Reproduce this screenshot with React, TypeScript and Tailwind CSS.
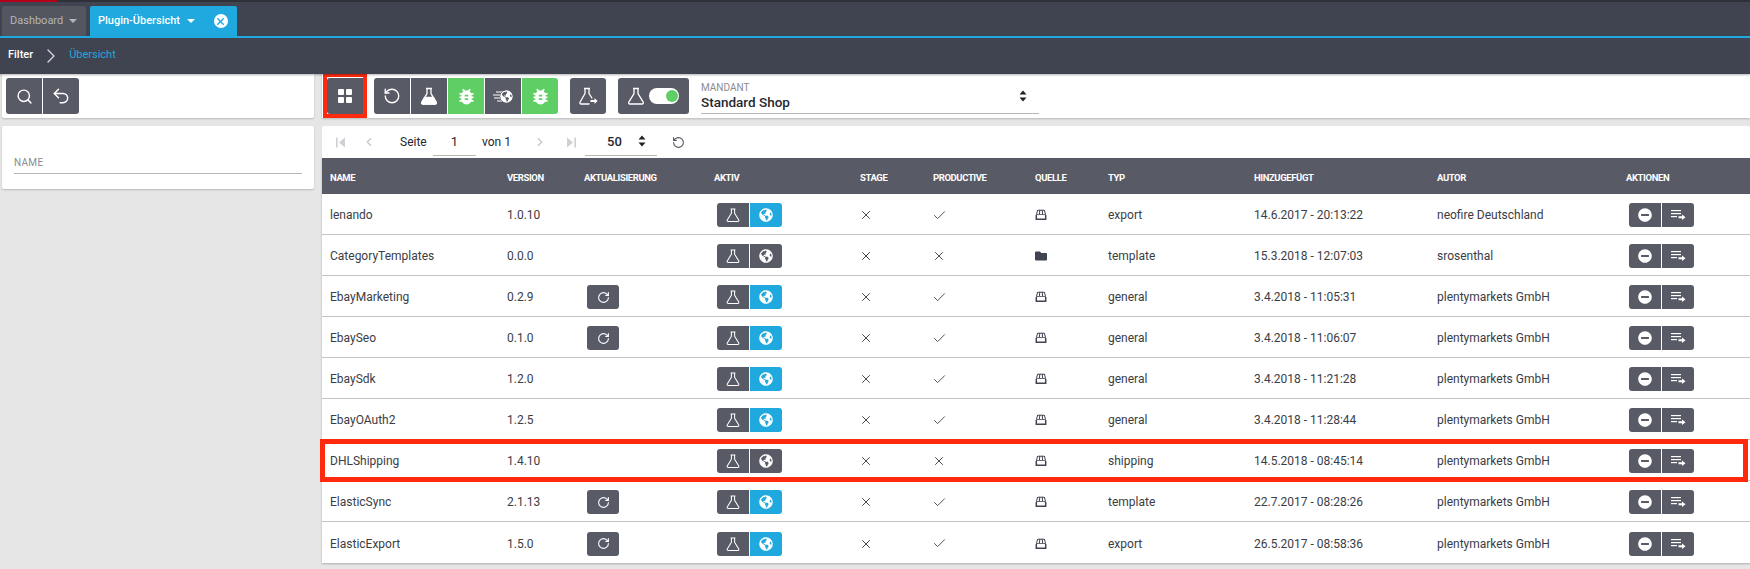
import React from 'react';
import { ChevronRight, ChevronLeft, Search, Undo2, RotateCcw, RotateCw, X, Check } from 'lucide-react';
import { FaGlobeAmericas, FaMinusCircle, FaFolder } from 'react-icons/fa';
import { MdBugReport } from 'react-icons/md';

const PLUGINS = [
  { name: 'lenando', version: '1.0.10', update: false, stage: false, productive: true, live: true, source: 'store', type: 'export', added: '14.6.2017 - 20:13:22', author: 'neofire Deutschland' },
  { name: 'CategoryTemplates', version: '0.0.0', update: false, stage: false, productive: false, live: false, source: 'folder', type: 'template', added: '15.3.2018 - 12:07:03', author: 'srosenthal' },
  { name: 'EbayMarketing', version: '0.2.9', update: true, stage: false, productive: true, live: true, source: 'store', type: 'general', added: '3.4.2018 - 11:05:31', author: 'plentymarkets GmbH' },
  { name: 'EbaySeo', version: '0.1.0', update: true, stage: false, productive: true, live: true, source: 'store', type: 'general', added: '3.4.2018 - 11:06:07', author: 'plentymarkets GmbH' },
  { name: 'EbaySdk', version: '1.2.0', update: false, stage: false, productive: true, live: true, source: 'store', type: 'general', added: '3.4.2018 - 11:21:28', author: 'plentymarkets GmbH' },
  { name: 'EbayOAuth2', version: '1.2.5', update: false, stage: false, productive: true, live: true, source: 'store', type: 'general', added: '3.4.2018 - 11:28:44', author: 'plentymarkets GmbH' },
  { name: 'DHLShipping', version: '1.4.10', update: false, stage: false, productive: false, live: false, source: 'store', type: 'shipping', added: '14.5.2018 - 08:45:14', author: 'plentymarkets GmbH', marked: true },
  { name: 'ElasticSync', version: '2.1.13', update: true, stage: false, productive: true, live: true, source: 'store', type: 'template', added: '22.7.2017 - 08:28:26', author: 'plentymarkets GmbH' },
  { name: 'ElasticExport', version: '1.5.0', update: true, stage: false, productive: true, live: true, source: 'store', type: 'export', added: '26.5.2017 - 08:58:36', author: 'plentymarkets GmbH' },
];

const COLS = 'grid grid-cols-[177px_77px_130px_146px_73px_102px_73px_146px_183px_189px_1fr] pl-2';

const Flask = ({ size = 20, fill = false }: { size?: number; fill?: boolean }) => (
  <svg width={size} height={size} viewBox="0 0 20 20" fill="none" stroke="currentColor" strokeWidth="1.3" strokeLinejoin="round">
    <path d="M7 2.5h6M8 2.5v5.2L2.8 16.2c-.5.9.1 1.8 1.1 1.8h12.2c1 0 1.6-.9 1.1-1.8L12 7.7V2.5" />
    {fill && <path d="M5.5 11.5h9l2.6 5.2c.2.6-.2 1.3-1 1.3H3.9c-.8 0-1.2-.7-1-1.3z" fill="currentColor" />}
  </svg>
);

const FlaskArrow = () => (
  <svg width="20" height="20" viewBox="0 0 20 20" fill="none" stroke="currentColor" strokeWidth="1.3" strokeLinejoin="round">
    <path d="M6 2.5h6M7 2.5v5L2 16.2c-.5.9.1 1.8 1.1 1.8h8.4M11 2.5v5l3.2 5" />
    <path d="M12.5 14h4v-2l3 3-3 3v-2h-4z" fill="currentColor" stroke="none" />
  </svg>
);

const GridIcon = () => (
  <svg width="16" height="16" viewBox="0 0 16 16" fill="currentColor">
    <rect x="1" y="1" width="6" height="6" rx="1" />
    <rect x="9" y="1" width="6" height="6" rx="1" />
    <rect x="1" y="9" width="6" height="6" rx="1" />
    <rect x="9" y="9" width="6" height="6" rx="1" />
  </svg>
);

const FastGlobe = () => (
  <span className="relative flex items-center justify-end w-[20px] h-[14px]">
    <svg className="absolute left-0 top-0" width="10" height="14" viewBox="0 0 10 14" stroke="currentColor" strokeWidth="1.2">
      <path d="M3 3h7M0 6h9M1 9h8M4 12h5" />
    </svg>
    <FaGlobeAmericas className="relative bg-[#585a66] rounded-full" size={13} />
  </span>
);

const StoreIcon = () => (
  <svg width="12" height="12" viewBox="0 0 12 12" fill="none" stroke="#3f4450">
    <path d="M3 1.2h6" strokeWidth="1" />
    <path d="M2.6 1 1.6 5M4.8 1 4.4 5M7.2 1 7.6 5M9.4 1l1 4" strokeWidth="1" />
    <path d="M1 5.5h10" strokeWidth="0.8" />
    <path d="M1.3 6v4.3h9.4V6" strokeWidth="1.5" />
  </svg>
);

const PlaylistArrow = () => (
  <svg width="15" height="12" viewBox="0 0 15 12" fill="currentColor">
    <rect x="0" y="1" width="10" height="1.2" />
    <rect x="0" y="4" width="10" height="1.2" />
    <rect x="0" y="7" width="6" height="1.2" />
    <path d="M7.5 7.2h3.5V5.4l3.5 2.8-3.5 2.8V9.2H7.5z" />
  </svg>
);

const SortArrows = () => (
  <svg width="8" height="12" viewBox="0 0 8 12" fill="#222">
    <path d="M4 0.5 7.5 4.5h-7zM4 11.5.5 7.5h7z" />
  </svg>
);

const PageEnd = ({ flip = false }: { flip?: boolean }) => (
  <svg className={flip ? 'rotate-180' : ''} width="10" height="11" viewBox="0 0 10 11" fill="#cfd0d3">
    <rect x="0" y="0.5" width="1.6" height="10" />
    <path d="M9 0.5v10L3 5.5z" />
  </svg>
);

const Btn = ({ children, color = 'bg-[#585a66]', w = 'w-9', h = 'h-9' }: { children: React.ReactNode; color?: string; w?: string; h?: string }) => (
  <button className={`${w} ${h} ${color} text-white flex items-center justify-center first:rounded-l-[3px] last:rounded-r-[3px]`}>
    {children}
  </button>
);

const App: React.FC = () => {
  return (
    <div className="h-[569px] w-[1750px] overflow-hidden flex flex-col bg-[#e6e6e6] font-['Roboto',sans-serif] text-[#3a3d45]">
      {/* Tabs */}
      <div className="h-[36px] bg-[#3f4450] shrink-0 flex flex-col">
        <div className="h-[2px] bg-[#2f3138]">
          <div className="h-[2px] w-[57px] bg-[#b3001b]" />
        </div>
        <div className="flex items-end gap-1 pl-[2px] mt-1 flex-1">
          <div className="h-[30px] w-[84px] bg-[#53555f] rounded-t-[2px] text-[11px] text-[#b4b6ba] pl-2 flex items-center whitespace-nowrap">
            Dashboard
            <span className="ml-[6px] w-0 h-0 border-x-[4px] border-x-transparent border-t-[4px] border-t-[#b4b6ba]" />
          </div>
          <div className="h-[30px] w-[147px] bg-[#1fa9de] rounded-t-[2px] text-[11px] font-medium text-white pl-2 flex items-center whitespace-nowrap">
            Plugin-Übersicht
            <span className="ml-[7px] w-0 h-0 border-x-[4px] border-x-transparent border-t-[4px] border-t-white" />
            <span className="ml-[19px] w-[14px] h-[14px] rounded-full bg-white text-[#1fa9de] flex items-center justify-center">
              <X size={11} strokeWidth={3} />
            </span>
          </div>
        </div>
      </div>

      {/* Breadcrumb */}
      <div className="h-[38px] shrink-0 bg-[#3f4450] border-t-2 border-[#1fa9de] flex items-center pl-2 pb-[1px] text-[11px] relative z-10 shadow-[0_1px_2px_rgba(0,0,0,0.3)]">
        <span className="text-white font-medium">Filter</span>
        <ChevronRight className="ml-[6px] text-[#d5d6d9]" size={24} strokeWidth={1.4} />
        <span className="ml-[6px] text-[#1fa9de]">Übersicht</span>
      </div>

      <div className="flex flex-1 min-h-0">
        {/* Left column */}
        <div className="w-[312px] ml-[2px] shrink-0 flex flex-col gap-2">
          <div className="h-[44px] bg-white rounded-b-[2px] shadow-[0_1px_2px_rgba(0,0,0,0.2)] flex items-center pl-1">
            <div className="flex gap-px">
              <Btn><Search size={17} strokeWidth={2} /></Btn>
              <Btn><Undo2 size={20} strokeWidth={1.8} /></Btn>
            </div>
          </div>
          <div className="h-[63px] bg-white rounded-[2px] shadow-[0_1px_2px_rgba(0,0,0,0.2)] px-3 pt-[30px]">
            <div className="text-[10px] leading-[14px] text-[#8a8c92] tracking-[0.3px] pb-[3px] border-b border-[#b8b8b8] h-[18px]">NAME</div>
          </div>
        </div>

        {/* Right column */}
        <div className="flex-1 ml-2 flex flex-col gap-2 min-w-0">
          <div className="h-[44px] bg-white shadow-[0_1px_2px_rgba(0,0,0,0.2)] flex items-center pl-[5px]">
            <div className="relative">
              <Btn><GridIcon /></Btn>
              <span className="absolute -left-1 -right-1 -top-[5px] -bottom-1 border-[4px] border-[#ff2a0d]" />
            </div>
            <div className="flex gap-px ml-[11px]">
              <Btn><RotateCcw size={18} strokeWidth={1.8} /></Btn>
              <Btn><Flask fill /></Btn>
              <Btn color="bg-[#5fcf65]"><MdBugReport size={21} /></Btn>
              <Btn><FastGlobe /></Btn>
              <Btn color="bg-[#5fcf65]"><MdBugReport size={21} /></Btn>
            </div>
            <div className="flex ml-3">
              <Btn><FlaskArrow /></Btn>
            </div>
            <div className="w-[71px] h-9 ml-3 bg-[#585a66] rounded-[3px] text-white flex items-center pl-2">
              <Flask />
              <span className="ml-[3px] w-[30px] h-[16px] bg-white rounded-full flex items-center justify-end pr-[1px]">
                <span className="w-[12px] h-[12px] rounded-full bg-[#5fcf65]" />
              </span>
            </div>
            <div className="w-[338px] ml-3 h-[36px] border-b border-[#b8b8b8] relative">
              <div className="text-[10px] leading-[12px] text-[#8a8c92] mt-[4px]">MANDANT</div>
              <div className="text-[13.5px] leading-[16px] font-medium text-[#26282e]">Standard Shop</div>
              <span className="absolute right-3 top-[12px]"><SortArrows /></span>
            </div>
          </div>

          <div className="flex-1 min-h-0">
            {/* Pagination */}
            <div className="h-[32px] bg-white rounded-t-[2px] flex items-center text-[12px] text-[#26282e]">
              <span className="ml-[14px]"><PageEnd /></span>
              <ChevronLeft className="ml-[16px] text-[#c4c5c8]" size={14} />
              <span className="ml-[24px] w-[33px]">Seite</span>
              <span className="w-[43px] h-[27px] pt-[3px] border-b border-[#b8b8b8] text-center text-[13px]">1</span>
              <span className="ml-[6px] w-[40px]">von 1</span>
              <ChevronRight className="ml-[11px] text-[#c4c5c8]" size={14} />
              <span className="ml-[19px]"><PageEnd flip /></span>
              <span className="ml-[9px] w-[72px] h-[27px] pt-[3px] border-b border-[#b8b8b8] flex gap-[16px] pl-[22px] font-medium text-[13px]">
                50
                <span className="mt-[3px]"><SortArrows /></span>
              </span>
              <RotateCcw className="ml-[15px] text-[#55575f]" size={13} />
            </div>

            {/* Table */}
            <div className="bg-white shadow-[0_1px_2px_rgba(0,0,0,0.25)]">
              <div className={`${COLS} h-9 pt-[4px] items-center bg-[#585a66] text-white text-[9.5px] tracking-[-0.4px] font-bold`}>
                <span>NAME</span>
                <span>VERSION</span>
                <span>AKTUALISIERUNG</span>
                <span>AKTIV</span>
                <span>STAGE</span>
                <span>PRODUCTIVE</span>
                <span>QUELLE</span>
                <span>TYP</span>
                <span>HINZUGEFÜGT</span>
                <span>AUTOR</span>
                <span>AKTIONEN</span>
              </div>
              {PLUGINS.map((p, i) => (
                <div key={p.name} className={`${COLS} relative h-[41px] pt-[2px] items-center text-[12px] ${i < PLUGINS.length - 1 ? 'border-b border-[#c4c4c6]' : ''}`}>
                  <span>{p.name}</span>
                  <span>{p.version}</span>
                  <span className="pl-[3px]">
                    {p.update && (
                      <div className="flex">
                        <Btn w="w-8" h="h-6"><RotateCw size={13} strokeWidth={2} /></Btn>
                      </div>
                    )}
                  </span>
                  <div className="flex gap-px pl-[3px]">
                    <Btn w="w-8" h="h-6"><Flask size={16} /></Btn>
                    <Btn w="w-8" h="h-6" color={p.live ? 'bg-[#1fa9de]' : 'bg-[#585a66]'}><FaGlobeAmericas size={14} /></Btn>
                  </div>
                  <span className="-ml-[1px]"><X size={14} strokeWidth={1.6} /></span>
                  <span className="-ml-[1px]">{p.productive ? <Check size={15} strokeWidth={1.4} /> : <X size={14} strokeWidth={1.6} />}</span>
                  <span>{p.source === 'store' ? <StoreIcon /> : <FaFolder size={12} className="text-[#3f4450]" />}</span>
                  <span>{p.type}</span>
                  <span>{p.added}</span>
                  <span>{p.author}</span>
                  <div className="flex gap-px pl-[3px]">
                    <Btn w="w-8" h="h-6"><FaMinusCircle size={14} /></Btn>
                    <Btn w="w-8" h="h-6"><PlaylistArrow /></Btn>
                  </div>
                  {p.marked && <span className="absolute -left-[2px] right-[2px] -top-px -bottom-[2px] border-[5px] border-[#ff2a0d] pointer-events-none" />}
                </div>
              ))}
            </div>
          </div>
        </div>
      </div>
    </div>
  );
};

export default App;
